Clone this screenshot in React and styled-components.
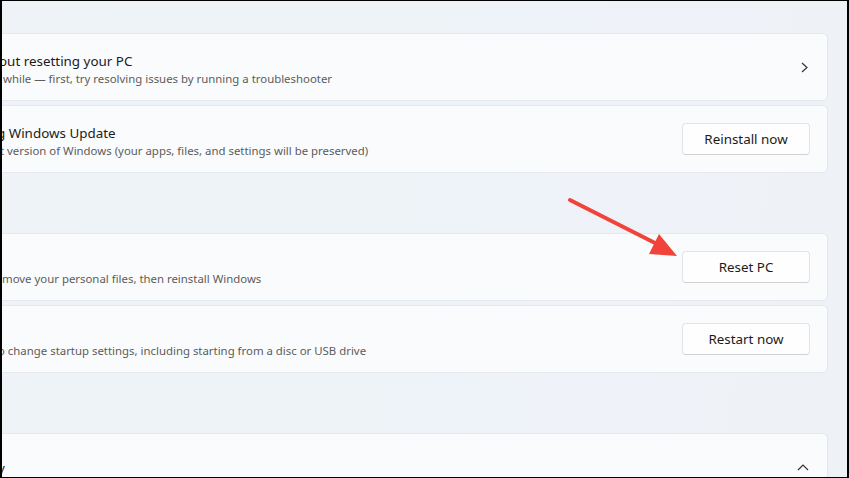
import React from 'react';
import styled, { createGlobalStyle } from 'styled-components';

const Global = createGlobalStyle`
  html, body {
    margin: 0;
    padding: 0;
    background: #000;
  }
  * {
    box-sizing: border-box;
  }
`;

const Frame = styled.div`
  position: relative;
  width: 849px;
  height: 478px;
  overflow: hidden;
  border-style: solid;
  border-color: #000;
  border-width: 1px 2px 1px 2px;
  background: linear-gradient(100deg, #eff3f7 0%, #eef3f9 55%, #eef2f7 100%);
  font-family: 'Noto Sans', 'Open Sans', sans-serif;
  color: #1b1b1b;
`;

const Content = styled.div`
  display: flex;
  flex-direction: column;
  gap: 60px;
  padding: 32px 19px 0 0;
  margin-left: -20px;
`;

const Group = styled.div`
  display: flex;
  flex-direction: column;
  gap: 4px;
`;

const Card = styled.div`
  display: flex;
  align-items: center;
  justify-content: space-between;
  height: 68px;
  flex-shrink: 0;
  padding: 0 17px 0 20px;
  background: #fafbfd;
  border: 1px solid #e4e7eb;
  border-radius: 5px;
`;

const Texts = styled.div`
  display: flex;
  flex-direction: column;
  padding-top: ${({ $pt }) => ($pt === undefined ? 3 : $pt)}px;
`;

const Title = styled.div`
  font-size: 13.4px;
  line-height: 19px;
  margin-left: ${({ $shift }) => -($shift || 0)}px;
  white-space: nowrap;
  min-height: 19px;
`;

const Sub = styled.div`
  font-size: 11.4px;
  line-height: 16px;
  color: #5c5c5c;
  margin-left: ${({ $shift }) => -($shift || 0)}px;
  white-space: nowrap;
`;

const Button = styled.button`
  width: 128px;
  height: 32px;
  background: #fefefe;
  border: 1px solid #e3e3e3;
  border-bottom-color: #d2d2d2;
  border-radius: 4px;
  font-family: inherit;
  font-size: 13.4px;
  color: #1b1b1b;
  padding: 0 0 1px;
`;

const Chevron = styled.svg`
  width: ${({ $w }) => $w}px;
  height: ${({ $h }) => $h}px;
  margin-right: ${({ $mr }) => $mr}px;
`;

const Arrow = styled.svg`
  position: absolute;
  left: 560px;
  top: 190px;
  width: 130px;
  height: 80px;
  overflow: visible;
`;

export default function App() {
  return (
    <>
      <Global />
      <Frame>
        <Content>
          <Group>
            <Card>
              <Texts $pt={5}>
                <Title $shift={4}>out resetting your PC</Title>
                <Sub $shift={0}>while — first, try resolving issues by running a troubleshooter</Sub>
              </Texts>
              <Chevron $w={7} $h={11} $mr={2} viewBox="0 0 7 11">
                <path d="M1 1 L6 5.5 L1 10" fill="none" stroke="#333" strokeWidth="1.2" />
              </Chevron>
            </Card>
            <Card>
              <Texts $pt={4}>
                <Title $shift={6}>g Windows Update</Title>
                <Sub $shift={3}>t version of Windows (your apps, files, and settings will be preserved)</Sub>
              </Texts>
              <Button>Reinstall now</Button>
            </Card>
          </Group>
          <Group>
            <Card>
              <Texts $pt={4}>
                <Title />
                <Sub $shift={1}>move your personal files, then reinstall Windows</Sub>
              </Texts>
              <Button>Reset PC</Button>
            </Card>
            <Card>
              <Texts $pt={4}>
                <Title />
                <Sub $shift={5}>o change startup settings, including starting from a disc or USB drive</Sub>
              </Texts>
              <Button>Restart now</Button>
            </Card>
          </Group>
          <Group>
            <Card>
              <Texts $pt={3}>
                <Title $shift={5}>y</Title>
              </Texts>
              <Chevron $w={12} $h={7} $mr={1} viewBox="0 0 12 7">
                <path d="M1 6 L6 1 L11 6" fill="none" stroke="#333" strokeWidth="1.2" />
              </Chevron>
            </Card>
          </Group>
        </Content>
        <Arrow viewBox="560 190 130 80">
          <line x1="568" y1="199" x2="655" y2="243" stroke="#f0443a" strokeWidth="4" strokeLinecap="round" />
          <polygon points="675,255 647,253 657,233" fill="#f0443a" />
        </Arrow>
      </Frame>
    </>
  );
}
